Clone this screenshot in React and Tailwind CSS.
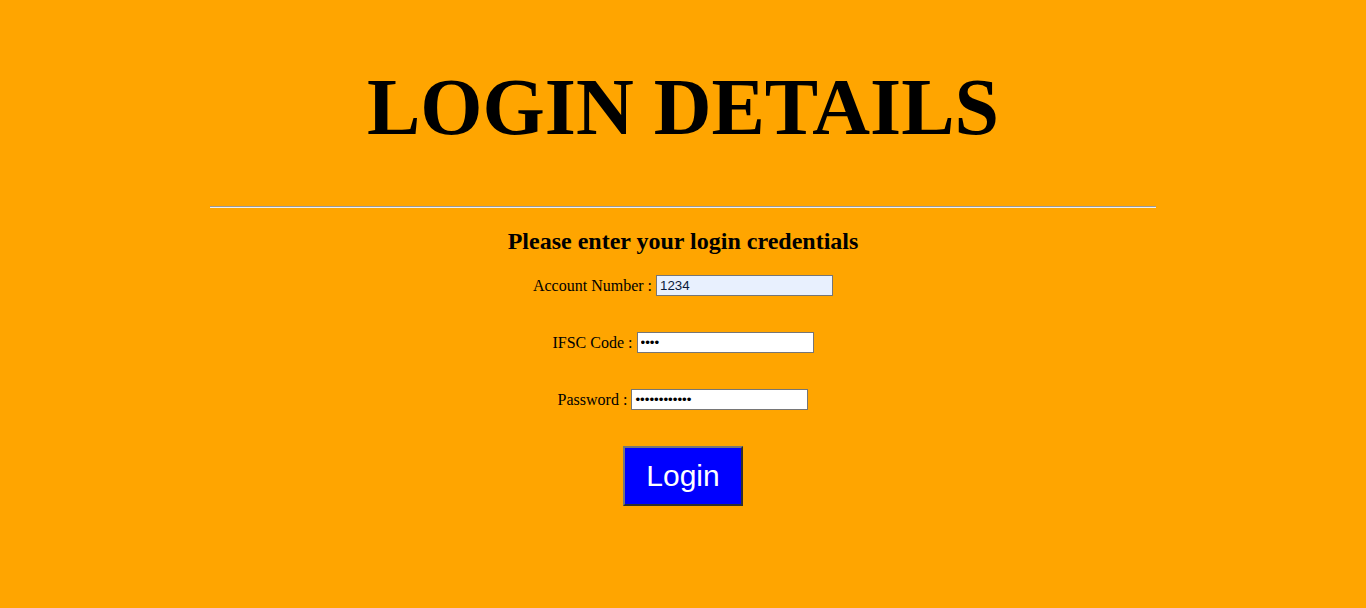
import { useState } from "react";

const Field = ({ label, type = "text", value, onChange, autofill }) => (
  <div className="flex items-center justify-center h-[21px]">
    <label className="text-[16px] leading-[20px] text-black mr-[4px]">
      {label} :
    </label>
    <input
      type={type}
      value={value}
      onChange={onChange}
      className={`w-[177px] h-[21px] border border-[#767676] px-[3px] text-[13.33px] font-['Liberation_Sans',Arial,sans-serif] outline-none ${
        autofill ? "bg-[#e8f0fe] text-[#0b1a3a]" : "bg-white text-black"
      }`}
    />
  </div>
);

const App = () => {
  const [account, setAccount] = useState("1234");
  const [ifsc, setIfsc] = useState("1234");
  const [password, setPassword] = useState("123456789012");

  return (
    <div className="min-h-[608px] bg-[#ffa500] font-['Liberation_Serif','Times_New_Roman',serif] flex flex-col items-center">
      <h1 className="mt-[67px] h-[80px] text-[80px] leading-none font-bold text-black">
        LOGIN DETAILS
      </h1>

      <hr className="mt-[59px] w-[946px] h-[2px] border-0 border-t border-t-[#9a9a9a] border-b border-b-[#eeeeee]" />

      <h2 className="mt-[19px] text-[24px] leading-[28px] font-bold text-black">
        Please enter your login credentials
      </h2>

      <form
        onSubmit={(e) => e.preventDefault()}
        className="mt-[20px] flex flex-col items-center gap-[36px]"
      >
        <Field
          label="Account Number"
          value={account}
          onChange={(e) => setAccount(e.target.value)}
          autofill
        />
        <Field
          label="IFSC Code"
          type="password"
          value={ifsc}
          onChange={(e) => setIfsc(e.target.value)}
        />
        <Field
          label="Password"
          type="password"
          value={password}
          onChange={(e) => setPassword(e.target.value)}
        />

        <button className="w-[120px] h-[60px] pb-[2px] bg-[#0000ff] text-white text-[30px] font-['Liberation_Sans',Arial,sans-serif] border-2 border-[#767676] border-r-[#2f2f2f] border-b-[#2f2f2f]">
          Login
        </button>
      </form>
    </div>
  );
};

export default App;
